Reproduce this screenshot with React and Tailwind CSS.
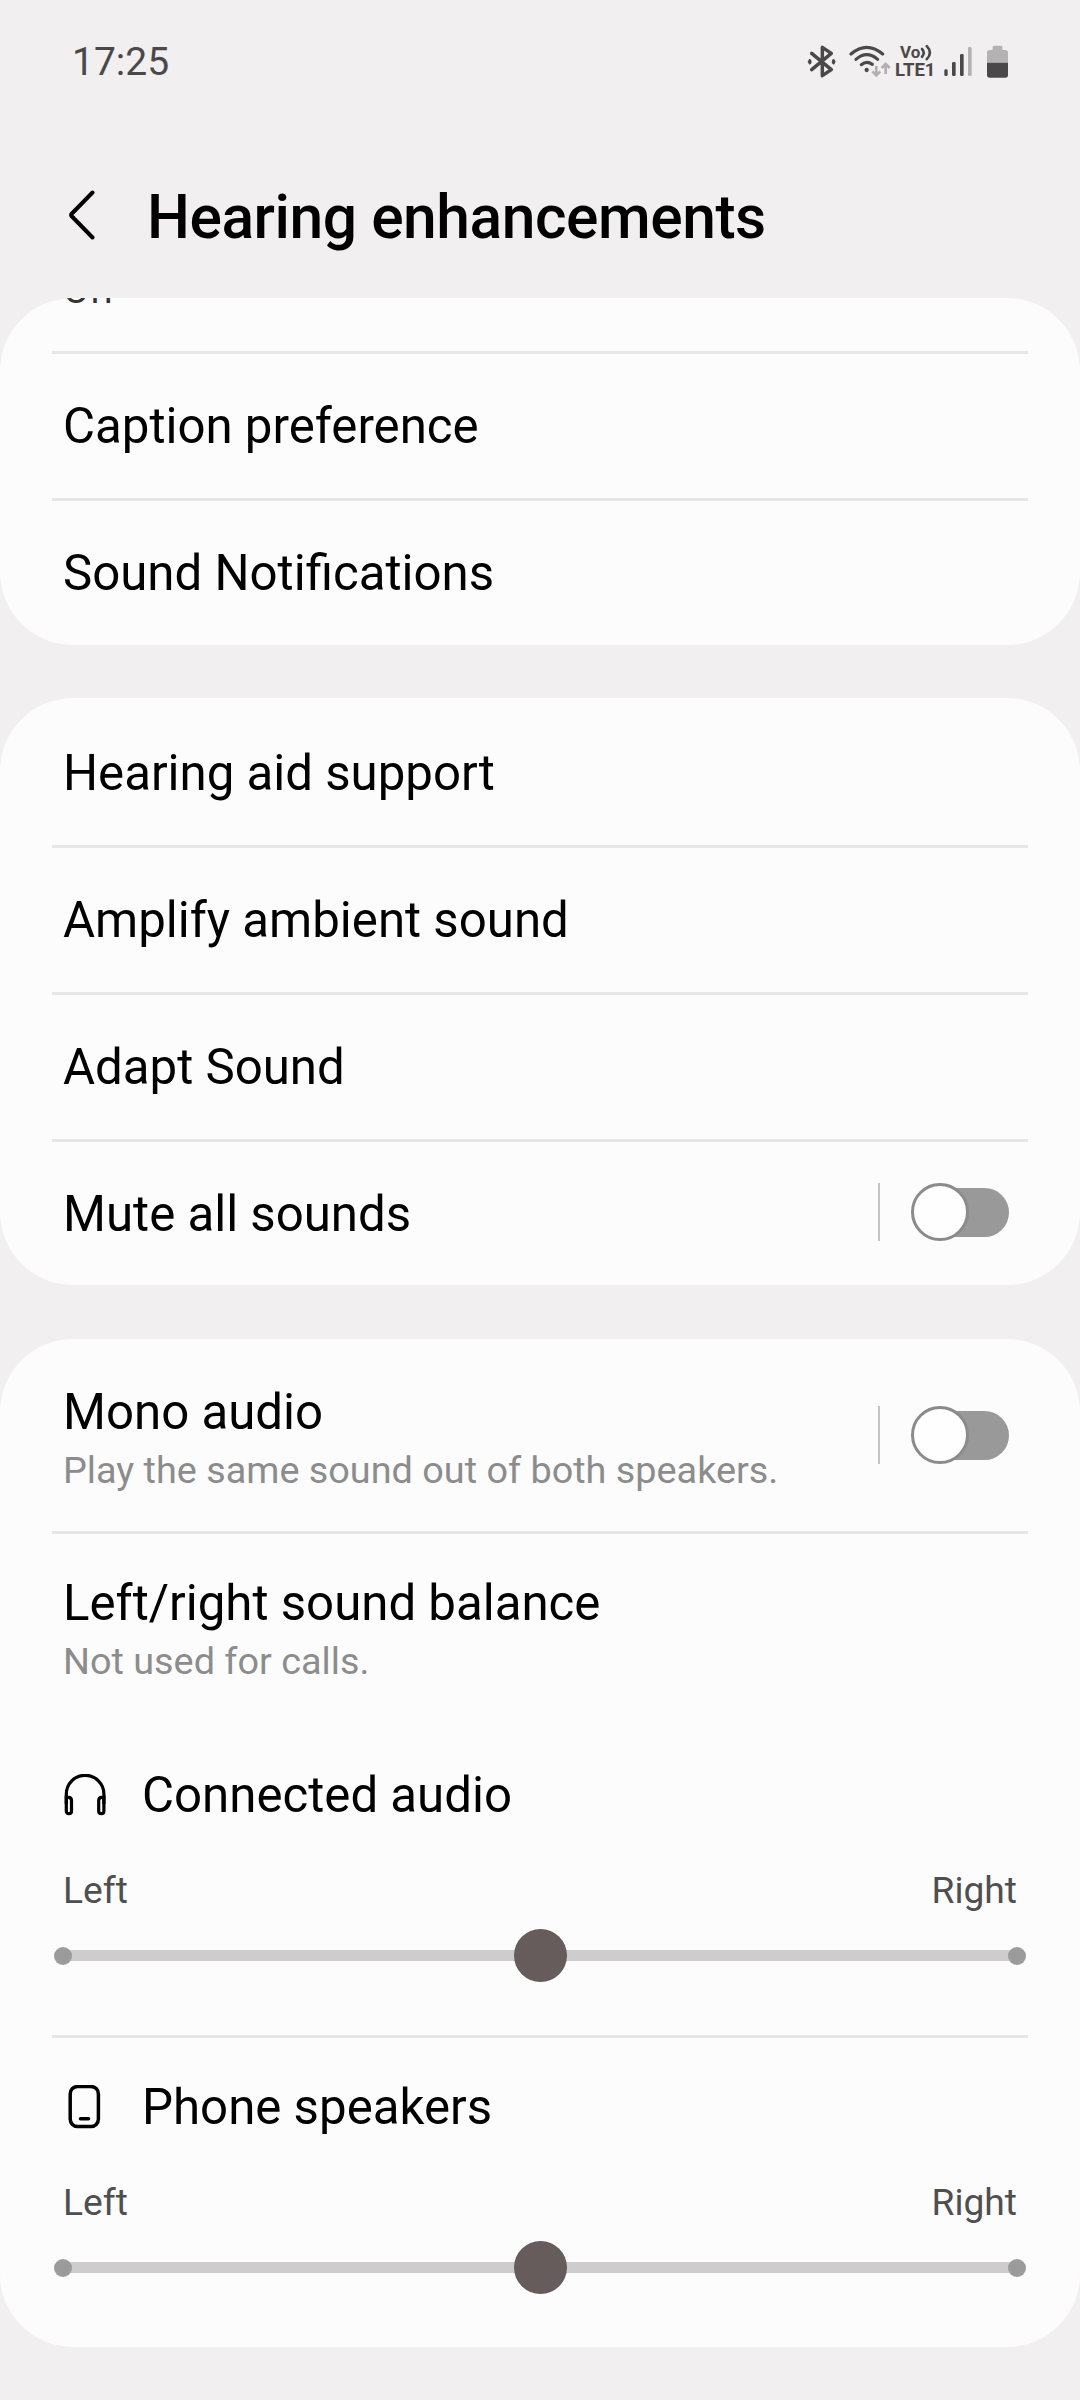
import React, { useState } from 'react';

const BluetoothIcon = () => (
    <svg width="41" height="36" viewBox="78 42 123 108" fill="none">
        <path d="M95 70L154 119L127 137V52L154 70L95 119" stroke="#4b4849" strokeWidth="10.5" strokeLinejoin="round" strokeLinecap="round" />
        <path d="M83 95L88 86Q95 88 95 95Q95 102 88 104Z M167 95L162 86Q155 88 155 95Q155 102 162 104Z" fill="#4b4849" />
    </svg>
);

const WifiIcon = () => (
    <svg width="48" height="36" viewBox="201 42 144 108" fill="none">
        <g stroke="#4b4849" strokeWidth="9.5" strokeLinecap="round">
            <path d="M213 72Q260 32 308 72" />
            <path d="M228 88Q260 60 293 88" />
            <path d="M244 104Q260 91 277 103" />
        </g>
        <circle cx="260" cy="120" r="6.5" fill="#4b4849" />
        <g stroke="#b3b0b1" strokeWidth="8">
            <path d="M289 108V136M277 124L289 136L301 124" />
            <path d="M317 132V102M305 114L317 102L329 114" />
        </g>
    </svg>
);

const VolteIcon = () => (
    <div className="w-[41px] h-9 flex flex-col font-bold text-[#4b4849] leading-none">
        <div className="flex items-center h-[17px] pl-[5px] text-[17px]">
            <span>Vo</span>
            <svg className="shrink-0" width="13" height="17" viewBox="0 0 13 17" fill="none" stroke="#4b4849" strokeWidth="2.6" strokeLinecap="round">
                <path d="M2 5Q5.4 8.7 2 12.8" />
                <path d="M6.8 2.2Q13 8.7 6.8 15.2" />
            </svg>
        </div>
        <span className="text-[18.5px] leading-[18px]">LTE1</span>
    </div>
);

const SignalIcon = () => (
    <svg width="41" height="36" viewBox="468 42 123 108">
        <rect x="493" y="118" width="10" height="20" rx="4" fill="#4b4849" />
        <rect x="516" y="96" width="11" height="42" rx="4" fill="#4b4849" />
        <rect x="540" y="72" width="11" height="66" rx="4" fill="#4b4849" />
        <rect x="564" y="51" width="11" height="87" rx="4" fill="#b4b2b3" />
    </svg>
);

const BatteryIcon = () => (
    <svg width="32" height="36" viewBox="591 42 96 108">
        <path d="M638 60V51Q638 47 642 47H663Q667 47 667 51V60H676Q684 60 684 68V98H621V68Q621 60 629 60Z" fill="#b4b2b3" />
        <path d="M621 98H684V135Q684 143 676 143H629Q621 143 621 135Z" fill="#4b4849" />
    </svg>
);

const HeadphonesIcon = () => (
    <svg width="42" height="42" viewBox="0 0 42 42" fill="none" stroke="#000" strokeWidth="3.2">
        <path d="M2.3 30V20.1A18.8 18.8 0 0 1 39.9 20.1V30" />
        <path d="M2.3 23.3H4.4Q7.5 23.3 7.5 26.4V36.9Q7.5 39.7 4.9 39.7Q2.3 39.7 2.3 36.9Z" />
        <path d="M39.9 23.3H37.8Q34.7 23.3 34.7 26.4V36.9Q34.7 39.7 37.3 39.7Q39.9 39.7 39.9 36.9Z" />
    </svg>
);

const PhoneIcon = () => (
    <svg width="42" height="44" viewBox="0 0 42 44" fill="none" stroke="#000" strokeWidth="3.5">
        <rect x="6.2" y="1.4" width="28.2" height="40.2" rx="7.5" />
        <path d="M16.5 33.7H24.5" strokeLinecap="round" />
    </svg>
);

const Divider = () => <div className="h-[3px] mx-[52px] bg-[#e6e6e6]" />;

const Card = ({ children, className = '' }) => (
    <section className={`bg-[#fcfcfc] rounded-[73px] overflow-hidden ${className}`}>{children}</section>
);

const Toggle = ({ label }) => {
    const [on, setOn] = useState(false);
    return (
        <div className="flex items-center">
            <div className="w-[2px] h-[58px] bg-[#c4c4c4]" />
            <button
                role="switch"
                aria-checked={on}
                aria-label={label}
                onClick={() => setOn(!on)}
                className={`ml-[35px] w-[94px] h-[49px] rounded-full flex items-center ${on ? 'justify-end bg-[#655c5b]' : 'bg-[#999999]'}`}
            >
                <span className="w-[58px] h-[58px] -ml-1 shrink-0 rounded-full bg-[#fefefe] border-[3px] border-[#8b8b8b]" />
            </button>
        </div>
    );
};

const Title = ({ children, className = '' }) => (
    <p className={`text-[49.2px] leading-[56px] ${className}`}>{children}</p>
);

const Row = ({ title, toggle }) => (
    <div className="h-36 pl-[63px] pr-[71px] flex items-center justify-between">
        <Title>{title}</Title>
        {toggle && (
            <div className="-mt-1">
                <Toggle label={title} />
            </div>
        )}
    </div>
);

const TitleBlock = ({ title, summary }) => (
    <div>
        <Title>{title}</Title>
        <p className="text-[37.8px] leading-[60px] text-[#8c8c8c]">{summary}</p>
    </div>
);

const BalanceSlider = ({ icon: Icon, title }) => (
    <div className="pb-[53px]">
        <div className="flex items-center h-14 pl-16">
            <Icon />
            <Title className="ml-9">{title}</Title>
        </div>
        <div className="mt-[43px] px-[63px] flex justify-between text-[37.2px] leading-[48px] text-[#4f4f4f]">
            <span>Left</span>
            <span>Right</span>
        </div>
        <div className="mt-[15px] mx-[54px] h-[53px] flex items-center">
            <div className="relative z-10 w-[18px] h-[18px] rounded-full bg-[#9b9b9b]" />
            <div className="flex-1 h-[11px] -mx-2 bg-[#cecccd]" />
            <div className="relative z-10 shrink-0 w-[53px] h-[53px] rounded-full bg-[#655c5b]" />
            <div className="flex-1 h-[11px] -mx-2 bg-[#cecccd]" />
            <div className="relative z-10 w-[18px] h-[18px] rounded-full bg-[#9b9b9b]" />
        </div>
    </div>
);

export default function App() {
    return (
        <div className="w-[1080px] h-[2400px] overflow-hidden bg-[#f1eff0] text-black font-[Roboto,sans-serif]">
            {/* Status bar */}
            <div className="h-[124px] pl-[72px] pr-[71px] flex items-center justify-between">
                <span className="text-[39px] text-[#4b4849]">17:25</span>
                <div className="flex items-center">
                    <BluetoothIcon />
                    <WifiIcon />
                    <VolteIcon />
                    <SignalIcon />
                    <BatteryIcon />
                </div>
            </div>

            {/* Header */}
            <header className="h-[174px] pt-[13px] pl-[67px] flex items-center">
                <svg className="-mt-1.5" width="30" height="50" viewBox="0 0 30 50" fill="none" stroke="#000" strokeWidth="4" strokeLinecap="round" strokeLinejoin="round">
                    <path d="M25.5 2.5L4.5 24Q3.8 25 4.5 26L25.5 47.5" />
                </svg>
                <h1 className="ml-[50px] text-[60.5px] leading-[72px] font-medium tracking-[-0.45px]">Hearing enhancements</h1>
            </header>

            <Card>
                {/* bottom of a row that is scrolled under the header */}
                <div className="h-[53px] pl-[63px] flex items-start">
                    <p className="-mt-[30px] text-[37.8px] leading-[44px] text-[#333]">Off</p>
                </div>
                <Divider />
                <Row title="Caption preference" />
                <Divider />
                <Row title="Sound Notifications" />
            </Card>

            <Card className="mt-[53px] pt-[3px] h-[587px]">
                <Row title="Hearing aid support" />
                <Divider />
                <Row title="Amplify ambient sound" />
                <Divider />
                <Row title="Adapt Sound" />
                <Divider />
                <Row title="Mute all sounds" toggle />
            </Card>

            <Card className="mt-[54px]">
                <div className="h-48 pt-[45px] pl-[63px] pr-[71px] flex justify-between">
                    <TitleBlock title="Mono audio" summary="Play the same sound out of both speakers." />
                    <div className="h-[102px] flex items-center">
                        <Toggle label="Mono audio" />
                    </div>
                </div>
                <Divider />
                <div className="pt-[41px] pl-[63px] pb-[76px]">
                    <TitleBlock title="Left/right sound balance" summary="Not used for calls." />
                </div>
                <BalanceSlider icon={HeadphonesIcon} title="Connected audio" />
                <Divider />
                <div className="h-[41px]" />
                <BalanceSlider icon={PhoneIcon} title="Phone speakers" />
            </Card>
        </div>
    );
}
